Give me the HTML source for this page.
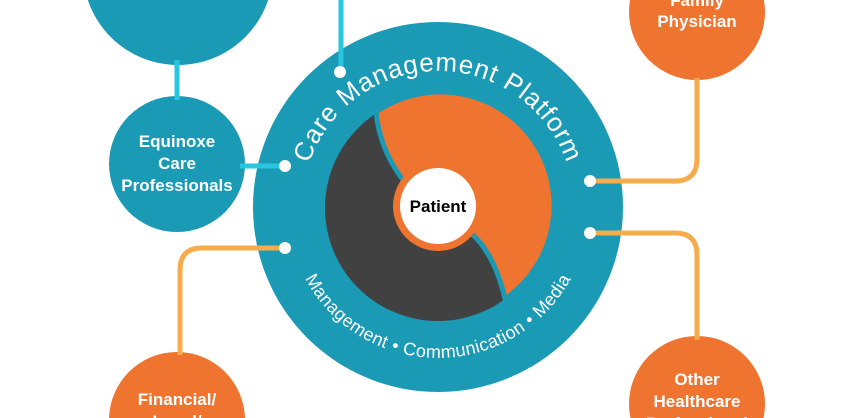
<!DOCTYPE html>
<html><head><meta charset="utf-8"><style>
html,body{margin:0;padding:0;background:#fff;width:849px;height:418px;overflow:hidden}
svg{display:block;overflow:hidden}
text{font-family:"Liberation Sans",sans-serif}
</style></head><body>
<svg width="849" height="418" viewBox="0 0 849 418" xmlns="http://www.w3.org/2000/svg">
<defs>
<path id="topArc" d="M302,207 A136,136 0 1 1 574,207 A136,136 0 1 1 302,207"/>
<path id="botArc" d="M287,207 A151,151 0 0 0 589,207"/>
</defs>
<!-- outer circles -->
<circle cx="178" cy="-30" r="95" fill="#1a9ab5"/>
<circle cx="177" cy="164" r="68" fill="#1a9ab5"/>
<circle cx="177" cy="420" r="68" fill="#ef7430"/>
<circle cx="697" cy="12" r="68" fill="#ef7430"/>
<circle cx="697" cy="404" r="68" fill="#ef7430"/>
<!-- main -->
<circle cx="438" cy="207" r="185" fill="#1a9ab5"/>
<circle cx="438" cy="208" r="113" fill="#414141"/>
<path d="M376,112 A113,113 0 0 1 505,299 Q495,255 472,234 L403,180 Q380,150 376,112 Z" fill="#ef7430" stroke="#1a9ab5" stroke-width="5" stroke-linejoin="round"/>
<circle cx="438" cy="206" r="45" fill="#ef7430"/>
<circle cx="438" cy="206" r="38" fill="#fff"/>
<text x="438" y="212" font-size="17" font-weight="bold" text-anchor="middle" fill="#000">Patient</text>
<!-- lines -->
<g fill="none" stroke-width="5">
<path d="M177,60 V100" stroke="#29c6e0"/>
<path d="M240,166 H285" stroke="#29c6e0"/>
<path d="M341,0 V72" stroke="#29c6e0"/>
<path d="M285,248 H202 Q180,248 180,270 V355" stroke="#f6ac4b"/>
<path d="M590,181 H675 Q697,181 697,159 V78" stroke="#f6ac4b"/>
<path d="M590,233 H675 Q697,233 697,255 V340" stroke="#f6ac4b"/>
</g>
<!-- dots -->
<g fill="#fff">
<circle cx="340" cy="72" r="6"/><circle cx="285" cy="166" r="6"/><circle cx="285" cy="248" r="6"/>
<circle cx="590" cy="181" r="6"/><circle cx="590" cy="233" r="6"/>
</g>
<text font-size="26" fill="#fff" letter-spacing="0.8"><textPath href="#topArc" startOffset="25%" text-anchor="middle">Care Management Platform</textPath></text>
<text font-size="18" fill="#fff" letter-spacing="0.4"><textPath href="#botArc" startOffset="50%" text-anchor="middle">Management • Communication • Media</textPath></text>
<g font-size="17" font-weight="bold" fill="#fff" text-anchor="middle">
<text x="177" y="147">Equinoxe</text><text x="177" y="169">Care</text><text x="177" y="191">Professionals</text>
<text x="177" y="405">Financial/</text><text x="177" y="427">Legal/</text>
<text x="697" y="6">Family</text><text x="697" y="27">Physician</text>
<text x="697" y="385">Other</text><text x="697" y="407">Healthcare</text><text x="697" y="429">Professional</text>
</g>
</svg>
</body></html>
